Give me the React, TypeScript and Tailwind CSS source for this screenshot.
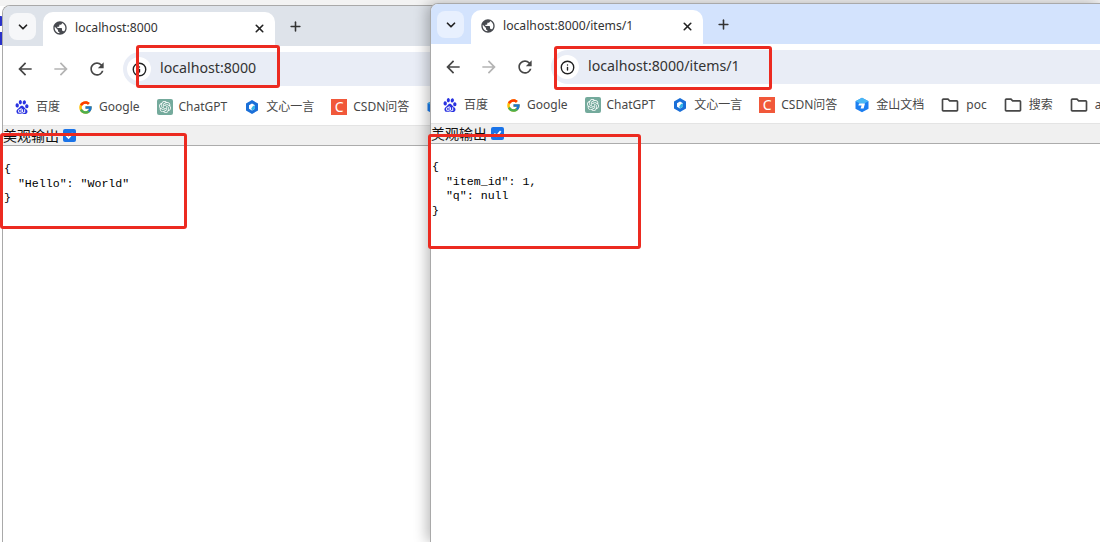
import React from 'react';
import { ChevronDown, X, Plus, Info } from 'lucide-react';
import { MdPublic, MdArrowBack, MdArrowForward, MdRefresh, MdOutlineFolder } from 'react-icons/md';
import { FcGoogle } from 'react-icons/fc';
import { SiBaidu, SiOpenai } from 'react-icons/si';

const WenxinIcon = () => (
  <svg viewBox="0 0 16 16" className="w-4 h-4">
    <path d="M8 1 L14 4.5 V11.5 L8 15 L2 11.5 V4.5 Z" fill="#1a6fd8" />
    <path d="M8 4.5 L11 6.2 V9.8 L8 11.5 L5 9.8 V6.2 Z" fill="#fff" />
    <path d="M9 7 L11 6.2 V9.8 L8 11.5 L7.2 9.6 Z" fill="#35b5e8" />
  </svg>
);

const KingsoftIcon = () => (
  <svg viewBox="0 0 16 16" className="w-4 h-4">
    <path d="M8 .8 L14.5 4.2 V11.8 L8 15.2 L1.5 11.8 V4.2 Z" fill="#1c7ef0" />
    <path d="M1.5 4.2 L8 .8 L14.5 4.2 L8 7.5 Z" fill="#49b8f5" />
    <path d="M5 6.5 H11 L9.6 11.5 H6.6 L7.6 8.6 H4.4 Z" fill="#fff" />
  </svg>
);

interface BookmarkItem {
  label: string;
  icon: React.ReactNode;
  isFolder?: boolean;
}

const Bookmark = ({ icon, label, isFolder }: BookmarkItem) => (
  <div className={`flex items-center shrink-0 ${isFolder ? 'gap-[8px] ml-[1px]' : 'gap-[6px]'}`}>
    <div className="w-4 h-4 flex items-center justify-center">{icon}</div>
    {label && <span className="text-[12px] text-[#474747] whitespace-nowrap">{label}</span>}
  </div>
);

const baseBookmarks: BookmarkItem[] = [
  { label: '百度', icon: <SiBaidu className="w-[14px] h-[14px] text-[#2932e1]" /> },
  { label: 'Google', icon: <FcGoogle className="w-[15px] h-[15px]" /> },
  {
    label: 'ChatGPT',
    icon: (
      <div className="w-4 h-4 rounded-[2px] bg-[#74aa9c] flex items-center justify-center">
        <SiOpenai className="w-3 h-3 text-white" />
      </div>
    ),
  },
  { label: '文心一言', icon: <WenxinIcon /> },
  {
    label: 'CSDN问答',
    icon: (
      <div className="w-4 h-4 bg-[#f1583a] flex items-center justify-center text-white text-[14px] leading-none">
        C
      </div>
    ),
  },
];

const folder = <MdOutlineFolder className="w-[20px] h-[20px] shrink-0 text-[#474747]" />;

const extraBookmarks: BookmarkItem[] = [
  { label: '金山文档', icon: <KingsoftIcon /> },
  { label: 'poc', icon: folder, isFolder: true },
  { label: '搜索', icon: folder, isFolder: true },
  { label: 'a', icon: folder, isFolder: true },
];

interface BrowserWindowProps {
  url: string;
  stripColor: string;
  chevronColor: string;
  className: string;
  bookmarks: BookmarkItem[];
  json: string;
}

const BrowserWindow: React.FC<BrowserWindowProps> = ({ url, stripColor, chevronColor, className, bookmarks, json }) => (
  <div className={`absolute flex flex-col overflow-hidden bg-white rounded-tl-[8px] border-l border-t border-[#a9a9a9] font-['Noto_Sans','Noto_Sans_CJK_SC',sans-serif] ${className}`}>
    {/* Tab strip */}
    <div className={`h-[40px] shrink-0 flex items-end pl-[6px] ${stripColor}`}>
      <div className={`w-[27px] h-[27px] mb-[6px] rounded-[8px] flex items-center justify-center ${chevronColor}`}>
        <ChevronDown className="w-[14px] h-[14px] text-[#222]" strokeWidth={3} />
      </div>
      <div className="ml-[7px] w-[232px] h-[34px] bg-white rounded-t-[10px] flex items-center pl-[9px] pr-[9px] pb-[2px]">
        <MdPublic className="w-[16px] h-[16px] text-[#474a4f] shrink-0" />
        <span className="ml-[7px] text-[12.2px] text-[#333] whitespace-nowrap">{url}</span>
        <X className="ml-auto w-[13px] h-[13px] text-[#222]" strokeWidth={3} />
      </div>
      <Plus className="ml-[13px] mb-[12px] w-[15px] h-[15px] text-[#333]" strokeWidth={2.5} />
    </div>

    {/* Toolbar */}
    <div className="h-[47px] shrink-0 flex items-start pt-[6px] pl-[12px]">
      <div className="h-[34px] flex items-center gap-[16px]">
        <MdArrowBack className="w-[20px] h-[20px] text-[#474747]" />
        <MdArrowForward className="w-[20px] h-[20px] text-[#b4b4b4]" />
        <MdRefresh className="w-[20px] h-[20px] text-[#474747]" />
      </div>
      <div className="ml-[16px] flex-1 h-[34px] bg-[#e9edf6] rounded-l-full flex items-center pl-[4px]">
        <div className="w-[24px] h-[24px] rounded-full bg-white flex items-center justify-center">
          <Info className="w-[15px] h-[15px] text-[#222]" strokeWidth={2.2} />
        </div>
        <span className="ml-[9px] -mt-[2px] text-[14.2px] text-[#333] whitespace-nowrap">{url}</span>
      </div>
    </div>

    {/* Bookmarks */}
    <div className="h-[33px] shrink-0 flex items-center gap-[17px] pl-[11px] pb-[4px] border-b border-[#e4e4e4] overflow-hidden">
      {bookmarks.map((b) => (
        <Bookmark key={b.label || 'clipped'} {...b} />
      ))}
    </div>

    {/* JSON viewer */}
    <div className="h-[20px] shrink-0 flex items-center bg-[#f0f0f0] border-b border-[#acacac] text-[14px] text-[#111]">
      <span className="leading-none">美观输出</span>
      <div className="ml-[4px] w-[13px] h-[13px] rounded-[2px] bg-[#1a73e8] flex items-center justify-center">
        <svg viewBox="0 0 12 12" className="w-[11px] h-[11px]">
          <path d="M2.5 6.2 L5 8.7 L9.5 3.5" fill="none" stroke="#fff" strokeWidth="2" />
        </svg>
      </div>
    </div>
    <pre className="pl-[1px] pt-[16px] font-['Liberation_Mono',monospace] text-[11.6px] leading-[14.5px] text-black">{json}</pre>
  </div>
);

const RedBox = ({ className }: { className: string }) => (
  <div className={`absolute border-[3px] border-[#ec2a20] rounded-[3px] ${className}`} />
);

export default function App() {
  return (
    <div className="relative w-[1100px] h-[542px] overflow-hidden bg-white">
      <div className="absolute left-0 top-0 w-full h-[6px] bg-[#f3f3f3]" />
      <div className="absolute left-0 top-[16px] w-[3px] h-[10px] rounded-r-[2px] bg-[#2932c9]" />
      <div className="absolute left-0 top-[32px] w-[3px] h-[13px] bg-[#2932c9]" />

      <BrowserWindow
        className="left-[2px] top-[5px] w-[440px] h-[537px]"
        url="localhost:8000"
        stripColor="bg-[#dee3ea]"
        chevronColor="bg-[#f6f7f9]"
        bookmarks={[...baseBookmarks, { label: '', icon: <KingsoftIcon /> }]}
        json={'{\n  "Hello": "World"\n}'}
      />
      <BrowserWindow
        className="left-[430px] top-[3px] w-[670px] h-[539px] shadow-[-3px_0_14px_rgba(0,0,0,0.28)]"
        url="localhost:8000/items/1"
        stripColor="bg-[#d3e3fd]"
        chevronColor="bg-[#e8f0fe]"
        bookmarks={[...baseBookmarks, ...extraBookmarks]}
        json={'{\n  "item_id": 1,\n  "q": null\n}'}
      />

      <RedBox className="left-[136px] top-[45px] w-[144px] h-[43px]" />
      <RedBox className="left-[0px] top-[133px] w-[187px] h-[96px]" />
      <RedBox className="left-[554px] top-[46px] w-[218px] h-[44px]" />
      <RedBox className="left-[428px] top-[134px] w-[213px] h-[115px]" />
    </div>
  );
}
